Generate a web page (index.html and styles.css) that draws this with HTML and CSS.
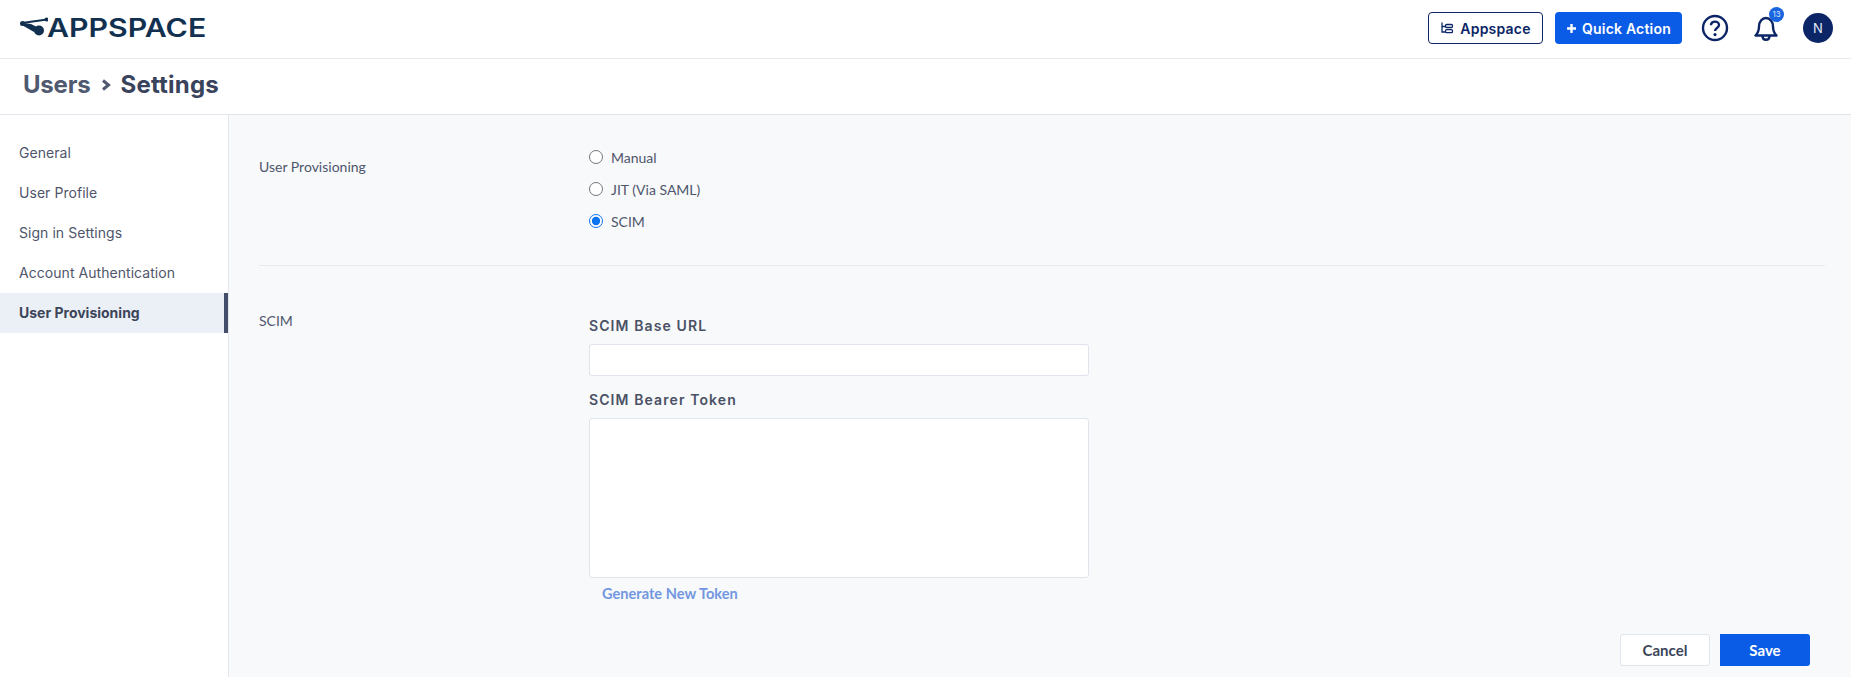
FILE: index.html
```html
<!DOCTYPE html>
<html lang="en">
<head>
<meta charset="utf-8">
<title>Users &gt; Settings</title>
<link rel="stylesheet" href="styles.css">
</head>
<body>
<header class="topbar">
  <div class="logo">
    <svg class="logo-mark" width="28" height="20" viewBox="0 0 28 20"><path d="M2 6L27 2.5" stroke="#12304f" stroke-width="1.8" fill="none"/><path d="M1 5.5L11 7L17 10L14 15L1 7.5Z" fill="#12304f"/><circle cx="2.5" cy="6.5" r="2.5" fill="#12304f"/><circle cx="26.5" cy="2.5" r="2" fill="#12304f"/><circle cx="19" cy="13.5" r="5" fill="#12304f"/></svg>
    <span class="logo-text">APPSPACE</span>
  </div>
  <div class="top-actions">
    <button class="btn-outline">
      <svg width="14" height="14" viewBox="0 0 14 14" fill="none" stroke="#0b2566" stroke-width="1.3"><path d="M2 1.5V11H5M2 5.5H5"/><rect x="5.5" y="3.5" width="7" height="3" rx="1.2"/><rect x="5.5" y="8.7" width="7" height="3" rx="1.2"/></svg>
      Appspace
    </button>
    <button class="btn-quick"><svg class="plus" width="11" height="11" viewBox="0 0 11 11"><path d="M5.5 1V10M1 5.5H10" stroke="#fff" stroke-width="2.4"/></svg>Quick Action</button>
    <svg class="help" width="28" height="28" viewBox="0 0 28 28" fill="none"><circle cx="14" cy="14" r="12" stroke="#0b2566" stroke-width="2.4"/><path d="M10 11.2C10 8.8 11.8 7.6 14 7.6C16.2 7.6 18 9 18 11C18 14 14 14 14 17" stroke="#0b2566" stroke-width="2.4" fill="none"/><circle cx="14" cy="20.6" r="1.6" fill="#0b2566"/></svg>
    <div class="bell">
      <svg width="24" height="26" viewBox="0 0 24 26" fill="none" stroke="#0b2566" stroke-width="2.4"><path d="M1.5 20.5H22.5C20 18 19 16 19 11.5C19 7 16 3 12 3C8 3 5 7 5 11.5C5 16 4 18 1.5 20.5Z" stroke-linejoin="round"/><path d="M8.5 21C8.5 26 15.5 26 15.5 21"/></svg>
      <span class="badge">13</span>
    </div>
    <div class="avatar">N</div>
  </div>
</header>
<div class="crumbs">
  <span class="crumb-parent">Users</span>
  <svg class="crumb-sep" width="10" height="12" viewBox="0 0 10 12" fill="none"><path d="M2 1.5L7.5 6L2 10.5" stroke="#4f5a70" stroke-width="3"/></svg>
  <span class="crumb-current">Settings</span>
</div>
<div class="body-row">
  <nav class="sidebar">
    <a class="nav-item">General</a>
    <a class="nav-item">User Profile</a>
    <a class="nav-item">Sign in Settings</a>
    <a class="nav-item">Account Authentication</a>
    <a class="nav-item active">User Provisioning</a>
  </nav>
  <main class="content">
    <section class="row row-first">
      <div class="row-label">User Provisioning</div>
      <div class="radios">
        <label class="radio"><input type="radio" name="p"><span>Manual</span></label>
        <label class="radio"><input type="radio" name="p"><span>JIT (Via SAML)</span></label>
        <label class="radio"><input type="radio" name="p" checked><span>SCIM</span></label>
      </div>
    </section>
    <section class="row row-second">
      <div class="row-label">SCIM</div>
      <div class="fields">
        <label class="field-label">SCIM Base URL</label>
        <input class="text-input" type="text">
        <label class="field-label token-label">SCIM Bearer Token</label>
        <textarea class="text-area"></textarea>
        <a class="gen-link">Generate New Token</a>
      </div>
    </section>
    <div class="footer-actions">
      <button class="btn-cancel">Cancel</button>
      <button class="btn-save">Save</button>
    </div>
  </main>
</div>
</body>
</html>
```
FILE: styles.css
```css
* { box-sizing: border-box; }
html, body { margin: 0; height: 677px; overflow: hidden; }
body { background: #fff; font-family: "Inter", sans-serif; color: #3c4559; display: flex; flex-direction: column; }

.topbar { height: 59px; flex: none; display: flex; align-items: center; justify-content: space-between; border-bottom: 1px solid #e9ebef; padding: 0 18px 2px 20px; }
.logo { display: flex; align-items: center; }
.logo-mark { margin-top: -3px; margin-right: -1px; }
.logo-text { display: inline-block; font-family: "Inter", sans-serif; font-weight: 600; font-size: 25px; line-height: 30px; letter-spacing: 0; color: #12304f; transform: scaleX(1.21); transform-origin: left center; }
.top-actions { display: flex; align-items: center; }
.btn-outline { width: 115px; height: 32px; border: 1px solid #0b2566; border-radius: 4px; background: #fff; color: #0b2566; font: 600 14px "Inter", sans-serif; letter-spacing: 0.2px; display: flex; align-items: center; justify-content: center; gap: 6px; padding: 0; }
.btn-quick { width: 127px; height: 32px; margin-left: 12px; border: 0; border-radius: 4px; background: #0a5ce6; color: #fff; font: 600 14px "Inter", sans-serif; letter-spacing: 0.2px; padding: 0; display: flex; align-items: center; justify-content: center; }
.plus { margin-right: 5px; }
.help { margin-left: 19px; }
.bell { position: relative; width: 24px; height: 26px; margin-left: 25px; }
.badge { position: absolute; top: -8px; left: 15px; width: 15px; height: 15px; border-radius: 50%; background: #1a66e0; color: #d6e4ff; font-size: 8px; line-height: 15px; text-align: center; }
.avatar { width: 30px; height: 30px; margin-left: 25px; border-radius: 50%; background: #0b2566; color: #e6ebf5; font-size: 13px; line-height: 30px; text-align: center; }

.crumbs { height: 56px; flex: none; display: flex; align-items: center; padding: 0 0 5px 23px; border-bottom: 1px solid #e3e5ec; font-size: 24px; font-weight: 700; }
.crumb-parent { color: #4f5a70; letter-spacing: -0.2px; }
.crumb-sep { margin: 2px 10px 0 10px; }
.crumb-current { color: #39435c; letter-spacing: 0.2px; }

.body-row { flex: 1; display: flex; min-height: 0; }
.sidebar { width: 229px; flex: none; padding-top: 18px; border-right: 1px solid #e3e6ef; background: #fff; }
.nav-item { display: block; height: 40px; line-height: 40px; padding-left: 19px; font-size: 14px; letter-spacing: 0.05px; color: #4f566b; }
.nav-item.active { background: #ebf0f7; border-right: 4px solid #434e6b; font-weight: 700; letter-spacing: 0; color: #3c4559; }

.content { flex: 1; background: #f7f9fb; padding: 0 26px 0 30px; display: flex; flex-direction: column; font-family: "Lato", sans-serif; }
.row { display: flex; }
.row-first { height: 151px; border-bottom: 1px solid #e8eaee; }
.row-second { height: 368px; }
.row-label { width: 330px; flex: none; font-size: 14px; color: #4f566b; }
.row-first .row-label { padding-top: 43px; line-height: 18px; }
.row-second .row-label { padding-top: 46px; line-height: 18px; }
.radios { padding-top: 26px; display: flex; flex-direction: column; margin-left: -2px; }
.radio { height: 32px; display: flex; align-items: center; font-size: 14px; color: #4f566b; }
.radio input { width: 14px; height: 14px; margin: 0 8px 0 2px; accent-color: #0a74f0; }
.fields { width: 500px; display: flex; flex-direction: column; padding-top: 51px; }
.field-label { font: 600 14px/18px "Inter", sans-serif; letter-spacing: 1.1px; color: #4a5165; }
.text-input { display: block; width: 100%; height: 32px; margin-top: 9px; border: 1px solid #e1e4ec; border-radius: 3px; background: #fff; padding: 0; }
.token-label { margin-top: 15px; }
.text-area { display: block; width: 100%; height: 160px; margin-top: 9px; border: 1px solid #e1e4ec; border-radius: 3px; background: #fff; resize: none; padding: 0; }
.gen-link { margin: 7px 0 0 13px; font-size: 14.6px; line-height: 18px; font-weight: 700; color: #7397e0; }
.footer-actions { display: flex; justify-content: flex-end; gap: 10px; padding: 0 15px 0 0; }
.btn-cancel, .btn-save { width: 90px; height: 32px; font: 700 15px "Lato", sans-serif; padding: 0; border-radius: 3px; }
.btn-cancel { background: #fff; border: 1px solid #e1e4ec; color: #3c4559; }
.btn-save { background: #0a5ce6; border: 0; color: #fff; border-radius: 0 3px 3px 0; }
```
